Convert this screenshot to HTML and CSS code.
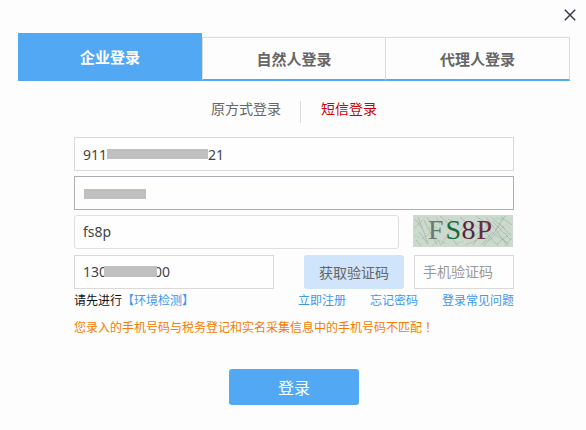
FILE: index.html
```
<!DOCTYPE html>
<html lang="zh-CN">
<head>
    <meta charset="UTF-8">
    <title>企业登录</title>
    <link rel="stylesheet" href="styles.css">
</head>
<body>
    <div class="login">
        <button class="close" aria-label="关闭">
            <svg width="12" height="12" viewBox="0 0 12 12"><path d="M.8.8 11.2 11.2M11.2.8.8 11.2" stroke="#33334a" stroke-width="1.4"/></svg>
        </button>

        <div class="tabs">
            <div class="tab active">企业登录</div>
            <div class="tab">自然人登录</div>
            <div class="tab">代理人登录</div>
        </div>

        <div class="modes">
            <span class="mode">原方式登录</span>
            <span class="mode current">短信登录</span>
        </div>

        <form class="form">
            <div class="field">911<span class="mask mask-id"></span>21</div>
            <div class="field focus"><span class="mask mask-name"></span></div>
            <div class="row">
                <input class="field code" type="text" value="fs8p">
                <svg class="captcha" width="100" height="32" viewBox="0 0 100 32">
                    <rect width="100" height="32" fill="#cbdacd"/>
                    <g class="noise">
                        <path d="M2 4l7 9M6 17l9 12M14 2l5 8M20 19l8 11M27 1l9 8M38 22l7 9M47 2l8 7M57 25l9-8M63 1l12 9M69 30l10-13M78 2l14 12M84 29l11-9M88 2l11 8M80 18l16 11M3 25l5 6" stroke="#7f9387"/>
                        <path d="M1 13l9-8M9 24l12-9M17 8l10 9M29 29l7-12M35 4l12 5M44 18l9-9M52 30l12-5M59 7l9 8M70 5l8 12M76 26l15-15M86 8l12 13M23 2l4 7M91 31l8-8" stroke="#c98990"/>
                        <path d="M5 2l10 26M11 5l13 25M73 2l22 29M66 10l19 21M79 6l19 19M60 30l16-22M71 31l15-20M92 1l-9 13" stroke="#8b8f90"/>
                        <path d="M1 20l6 3M13 14l8-2M25 25l9 4M33 13l8-5M42 29l9-3M55 16l8 5M67 21l9 3M82 3l9 2M90 18l8 1M19 31l5-5" stroke="#6fd6a1"/>
                    </g>
                    <g class="captcha-text">
                        <text x="15" y="24" fill="#697a73">F</text>
                        <text x="32.5" y="24" fill="#176945">S</text>
                        <text x="48.5" y="24" fill="#572344">8</text>
                        <text x="63.5" y="24" fill="#6b2b3b">P</text>
                    </g>
                </svg>
            </div>
            <div class="row row-phone">
                <div class="field phone">130<span class="mask mask-phone"></span>00</div>
                <button class="send" type="button">获取验证码</button>
                <input class="field sms" type="text" placeholder="手机验证码">
            </div>
        </form>

        <div class="links">
            <span class="check">请先进行<a>【环境检测】</a></span>
            <a>立即注册</a>
            <a>忘记密码</a>
            <a>登录常见问题</a>
        </div>
        <p class="error">您录入的手机号码与税务登记和实名采集信息中的手机号码不匹配<span class="mark">！</span></p>
        <button class="submit">登录</button>
    </div>
</body>
</html>
```
FILE: styles.css
```
* {
    box-sizing: border-box;
}
body {
    margin: 0;
    height: 430px;
    overflow: hidden;
    background: #fdfdfd;
    color: #444;
    font-family: "Noto Sans", "Noto Sans CJK SC", sans-serif;
    font-size: 14px;
}
button {
    padding: 0;
    border: none;
    font-family: inherit;
}
.login {
    position: relative;
    padding: 33px 16px 0 18px;
}
.close {
    position: absolute;
    top: 9px;
    right: 10px;
    width: 12px;
    height: 12px;
    background: none;
}
.close svg {
    display: block;
}

.tabs {
    display: flex;
    align-items: flex-end;
    height: 48px;
}
.tab {
    width: 184px;
    height: 44px;
    border-top: 1px solid #dadada;
    border-right: 1px solid #dadada;
    border-bottom: 2px solid #53a8f4;
    color: #666;
    font-size: 15px;
    font-weight: bold;
    line-height: 43px;
    text-align: center;
}
.tab.active {
    height: 48px;
    border: none;
    background: #53a8f4;
    color: #fff;
    line-height: 48px;
}
.tab.active + .tab {
    border-left: 1px solid #dadada;
}

.modes {
    display: flex;
    margin: 20px 0 0 193px;
    line-height: 16px;
}
.mode {
    width: 90px;
    height: 22px;
    color: #666;
    border-right: 1px solid #dadada;
}
.mode.current {
    border: none;
    padding-left: 20px;
    color: #d00000;
}

.form {
    width: 440px;
    margin: 14px 0 0 56px;
}
.field {
    display: flex;
    align-items: center;
    height: 34px;
    margin: 0 0 5px;
    padding: 0 8px;
    border: 1px solid #d9d9d9;
    background: #fefefe;
    color: #444;
    font-family: inherit;
    font-size: 14px;
}
.field.focus {
    border-color: #acacb2;
}
.row {
    display: flex;
}
.code {
    width: 325px;
    padding-bottom: 1px;
    border-color: #e0e0e0;
    border-radius: 3px;
}
.captcha {
    margin-left: 14px;
}
.noise {
    fill: none;
    stroke-opacity: .5;
    stroke-width: .8;
}
.captcha-text {
    font: 28px "Liberation Serif", serif;
}
.row-phone {
    margin-top: 1px;
}
.phone {
    width: 200px;
    padding-bottom: 1px;
}
.send {
    width: 100px;
    height: 34px;
    margin: 0 10px 0 30px;
    border-radius: 3px;
    background: #d0e5fb;
    color: #666;
    font-size: 14px;
}
.sms {
    width: 100px;
    padding-bottom: 1px;
}
.sms::placeholder {
    color: #999;
}
.mask {
    height: 10px;
    background: #c0c0c0;
}
.mask-id {
    width: 101px;
    margin-top: -1px;
}
.mask-name {
    width: 62px;
    margin: 2px 0 0 1px;
}
.mask-phone {
    z-index: 1;
    width: 53px;
    height: 11px;
    margin: 0 -3px;
}

.links {
    display: flex;
    gap: 24px;
    width: 440px;
    margin: 0 0 0 56px;
    color: #111;
    font-size: 12px;
    line-height: 14px;
}
.links a {
    color: #4098ee;
}
.check {
    margin-right: auto;
}
.error {
    margin: 13px 0 0 56px;
    color: #f57c00;
    font-size: 12px;
    line-height: 14px;
}
.mark {
    padding-left: 3px;
}
.submit {
    display: block;
    width: 130px;
    height: 36px;
    margin: 34px 0 0 211px;
    border-radius: 3px;
    background: #53a8f4;
    color: #fff;
    font-size: 16px;
}
```
